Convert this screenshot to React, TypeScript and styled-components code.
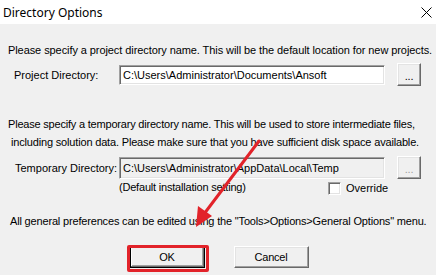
import React, {FunctionComponent} from "react";
import styled, {createGlobalStyle} from "styled-components";

const GlobalStyle = createGlobalStyle`
  html, body {
    margin: 0;
    padding: 0;
    background: #f0f0f0;
  }
`;

const Window = styled.div`
  position: relative;
  width: 436px;
  height: 275px;
  overflow: hidden;
  background: #f0f0f0;
  font-family: "Liberation Sans", Arial, sans-serif;
  font-size: 11px;
  color: #000;
`;

const TitleBar = styled.div`
  display: flex;
  align-items: center;
  justify-content: space-between;
  height: 24px;
  padding: 0 4px 0 3px;
  background: #fff;
  box-sizing: border-box;
`;

const Title = styled.span`
  font-family: "Noto Sans", "Noto Sans CJK SC", sans-serif;
  font-size: 12px;
  color: #000;
`;

const Body = styled.div`
  display: flex;
  flex-direction: column;
`;

const Text = styled.div<{ $top: number; $left: number; $lh?: number; $ls?: number }>`
  margin-top: ${p => p.$top}px;
  padding-left: ${p => p.$left}px;
  line-height: ${p => p.$lh ?? 14}px;
  height: ${p => p.$lh ?? 14}px;
  white-space: nowrap;
  letter-spacing: ${p => p.$ls ?? -0.2}px;
`;

const Row = styled.div<{ $top: number; $left: number }>`
  display: flex;
  align-items: center;
  margin-top: ${p => p.$top}px;
  padding-left: ${p => p.$left}px;
  height: 23px;
`;

const Label = styled.span<{ $width: number }>`
  flex: 0 0 ${p => p.$width}px;
  white-space: nowrap;
`;

const Field = styled.div<{ $disabled?: boolean }>`
  box-sizing: border-box;
  width: 266px;
  height: ${p => p.$disabled ? 22 : 20}px;
  padding: 0 3px;
  line-height: ${p => p.$disabled ? 20 : 18}px;
  background: ${p => p.$disabled ? "#f0f0f0" : "#fff"};
  border-top: 1px solid #a0a0a0;
  border-left: 1px solid #a0a0a0;
  border-bottom: 1px solid #fff;
  border-right: 1px solid #fff;
  box-shadow: inset 1px 1px 0 #696969, inset -1px -1px 0 #e3e3e3;
  white-space: nowrap;
  overflow: hidden;
`;

const Button = styled.button<{ $width: number; $height?: number; $disabled?: boolean }>`
  box-sizing: border-box;
  width: ${p => p.$width}px;
  height: ${p => p.$height ?? 23}px;
  padding: 0;
  margin: 0;
  font-family: "Liberation Sans", Arial, sans-serif;
  font-size: 11px;
  color: ${p => p.$disabled ? "#a0a0a0" : "#000"};
  background: #f0f0f0;
  border-top: 1px solid #fff;
  border-left: 1px solid #fff;
  border-bottom: 1px solid #696969;
  border-right: 1px solid #696969;
  box-shadow: inset -1px -1px 0 #a0a0a0, inset 1px 1px 0 #e3e3e3;
  letter-spacing: -0.2px;
`;

const Browse = styled(Button)`
  margin-left: 12px;
  line-height: 1;
  padding-top: 4px;
`;

const NoteRow = styled.div`
  display: flex;
  align-items: center;
  margin-top: 1px;
  padding-left: 119px;
  height: 14px;
`;

const Note = styled.span`
  flex: 0 0 209px;
  white-space: nowrap;
  letter-spacing: -0.2px;
`;

const CheckBox = styled.span`
  box-sizing: border-box;
  width: 13px;
  height: 13px;
  margin-top: 2px;
  background: #fff;
  border-top: 1px solid #a0a0a0;
  border-left: 1px solid #a0a0a0;
  border-bottom: 1px solid #fff;
  border-right: 1px solid #fff;
  box-shadow: inset 1px 1px 0 #696969, inset -1px -1px 0 #e3e3e3;
`;

const CheckLabel = styled.span`
  margin-left: 5px;
  margin-top: 2px;
`;

const Footer = styled.div`
  display: flex;
  justify-content: center;
  gap: 29px;
  margin-top: 18px;
  padding-left: 2px;
`;

const Highlight = styled.span`
  position: relative;
  display: inline-flex;

  &::after {
    content: "";
    position: absolute;
    left: -3px;
    top: -1px;
    right: -4px;
    bottom: -4px;
    border: 3px solid #e2232a;
    border-radius: 2px;
  }
`;

const DefaultButton = styled(Button)`
  border: 1px solid #000;
  box-shadow: inset -1px -1px 0 #696969, inset 1px 1px 0 #fff, inset -2px -2px 0 #a0a0a0;
`;

const Arrow = styled.svg`
  position: absolute;
  left: 0;
  top: 0;
  pointer-events: none;
`;

const CloseIcon: FunctionComponent = () => (
    <svg width="11" height="11" viewBox="0 0 11 11">
        <path d="M0.5 0.5 L10.5 10.5 M10.5 0.5 L0.5 10.5" stroke="#000" strokeWidth="1" fill="none"/>
    </svg>
);

const App: FunctionComponent = () => {
    return <Window>
        <GlobalStyle/>
        <TitleBar>
            <Title>Directory Options</Title>
            <CloseIcon/>
        </TitleBar>
        <Body>
            <Text $top={19} $left={8} $ls={-0.08}>
                Please specify a project directory name. This will be the default location for new projects.
            </Text>
            <Row $top={6} $left={14}>
                <Label $width={105}>Project Directory:</Label>
                <Field>C:\Users\Administrator\Documents\Ansoft</Field>
                <Browse $width={24}>...</Browse>
            </Row>
            <Text $top={29} $left={8} $lh={18} $ls={-0.2}>
                Please specify a temporary directory name. This will be used to store intermediate files,
            </Text>
            <Text $top={0} $left={11} $lh={18} $ls={-0.17}>
                including solution data. Please make sure that you have sufficient disk space available.
            </Text>
            <Row $top={5} $left={15}>
                <Label $width={104}>Temporary Directory:</Label>
                <Field $disabled>C:\Users\Administrator\AppData\Local\Temp</Field>
                <Browse $width={24} $disabled>...</Browse>
            </Row>
            <NoteRow>
                <Note>(Default installation setting)</Note>
                <CheckBox/>
                <CheckLabel>Override</CheckLabel>
            </NoteRow>
            <Text $top={20} $left={10} $ls={-0.17}>
                All general preferences can be edited using the "Tools&gt;Options&gt;General Options" menu.
            </Text>
            <Footer>
                <Highlight>
                    <DefaultButton $width={75} $height={22}>OK</DefaultButton>
                </Highlight>
                <Button $width={75} $height={22}>Cancel</Button>
            </Footer>
        </Body>
        <Arrow width="436" height="275" viewBox="0 0 436 275">
            <line x1="259" y1="141" x2="204" y2="214" stroke="#e2232a" strokeWidth="3" strokeLinecap="round"/>
            <polygon points="196,227 198,206 212,216" fill="#e2232a"/>
        </Arrow>
    </Window>;
};

export default App;
